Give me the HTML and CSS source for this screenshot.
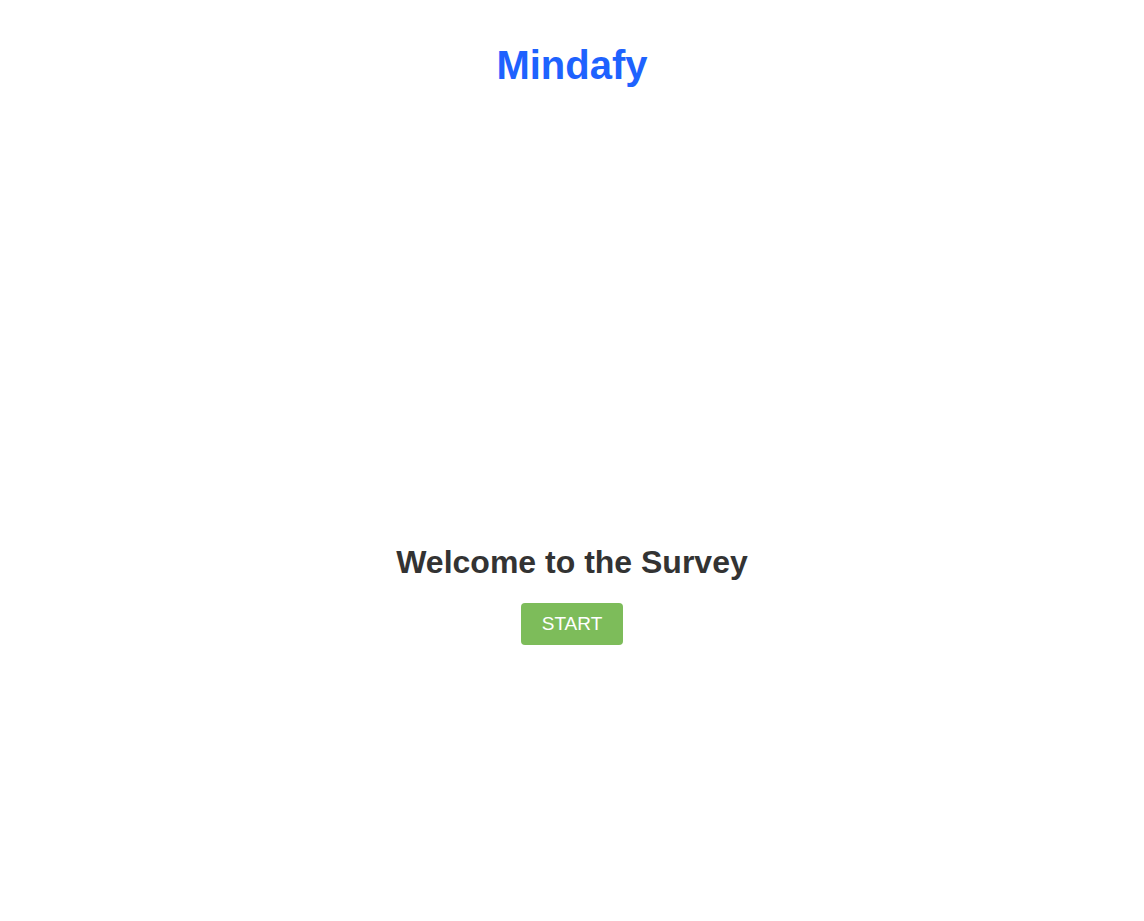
FILE: index.html
```html
<!DOCTYPE html>
<html lang="en">
<head>
<meta charset="utf-8">
<title>Mindafy</title>
<link rel="stylesheet" href="styles.css">
</head>
<body>
<header class="header">
  <h1 class="logo">Mindafy</h1>
</header>
<main class="welcome">
  <h2 class="welcome-title">Welcome to the Survey</h2>
  <button class="start-btn" type="button">START</button>
</main>
</body>
</html>
```
FILE: styles.css
```css
html, body {
  margin: 0;
  padding: 0;
  background: #fff;
}
body {
  font-family: "Liberation Sans", Arial, sans-serif;
  min-height: 921px;
}
.header {
  padding-top: 42px;
  text-align: center;
}
.logo {
  margin: 0;
  font-size: 40px;
  line-height: 46px;
  font-weight: 700;
  color: #1e62fe;
}
.welcome {
  display: flex;
  flex-direction: column;
  align-items: center;
  padding-top: 456px;
}
.welcome-title {
  margin: 0 0 22px;
  font-size: 32px;
  line-height: 37px;
  font-weight: 700;
  color: #333;
}
.start-btn {
  font-family: "Liberation Sans", Arial, sans-serif;
  font-size: 19px;
  line-height: 22px;
  padding: 10px 21px;
  border: none;
  border-radius: 4px;
  background: #7dbc5a;
  color: #fff;
  cursor: pointer;
}
```
